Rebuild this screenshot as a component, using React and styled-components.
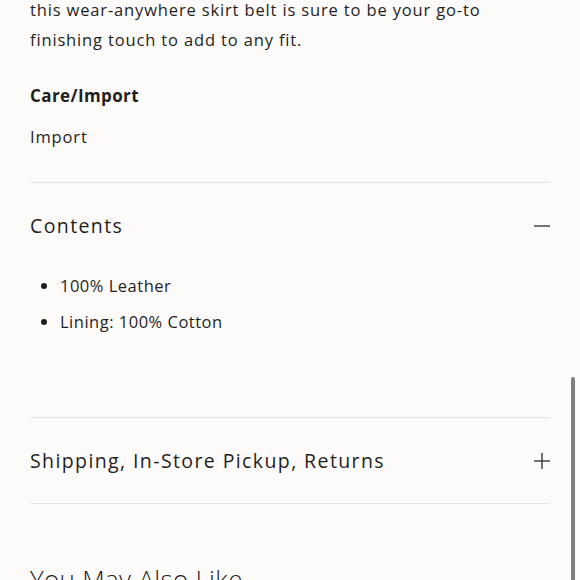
import styled, { createGlobalStyle } from "styled-components";

const GlobalStyle = createGlobalStyle`
  body {
    margin: 0;
    background: #fdfbf9;
    color: #1f1f1f;
    font-family: "Open Sans", "Liberation Sans", sans-serif;
    overflow: hidden;
  }
`;

const Page = styled.div`
  height: 580px;
  overflow: hidden;
  padding: 0 30px;
`;

const Text = styled.p`
  margin: ${(p) => p.$m || "0"};
  font-size: 16.5px;
  line-height: 30px;
  letter-spacing: 0.85px;
`;

const Label = styled.h4`
  margin: 26px 0 0;
  font-size: 17px;
  line-height: 30px;
  font-weight: 700;
  letter-spacing: 0.4px;
`;

const Item = styled.section`
  border-top: 1px solid #e7e3df;
  margin-top: ${(p) => p.$mt || "0"};
`;

const Header = styled.div`
  display: flex;
  align-items: center;
  justify-content: space-between;
  height: 85px;
`;

const Title = styled.h3`
  margin: 0;
  font-size: 19.5px;
  font-weight: 400;
  letter-spacing: 1.4px;
`;

const List = styled.ul`
  margin: -1px 0 0;
  padding: 0 0 78px 30px;
  list-style: disc;
`;

const Li = styled.li`
  font-size: 16.5px;
  line-height: 36px;
  height: 36px;
  letter-spacing: 0.5px;
  &::marker {
    font-size: 18px;
  }
`;

const Heading = styled.h2`
  margin: 58px 0 0;
  font-size: 26px;
  line-height: 34px;
  font-weight: 300;
  letter-spacing: 0.3px;
`;

const Scrollbar = styled.div`
  position: fixed;
  left: 571px;
  top: 377px;
  width: 4px;
  height: 220px;
  background: #7f7f7f;
  border-radius: 2px;
`;

function Toggle({ open }) {
  return (
    <svg width="16" height="16" viewBox="0 0 16 16" fill="none" stroke="#2a2a2a" strokeWidth="1.3">
      <line x1="0" y1="8" x2="16" y2="8" />
      {!open && <line x1="8" y1="0" x2="8" y2="16" />}
    </svg>
  );
}

export default function App() {
  return (
    <>
      <GlobalStyle />
      <Page>
        <Text $m="-5px 0 0">
          this wear-anywhere skirt belt is sure to be your go-to finishing touch to add to any fit.
        </Text>
        <Label>Care/Import</Label>
        <Text $m="11px 0 0">Import</Text>
        <Item $mt="30px">
          <Header>
            <Title>Contents</Title>
            <Toggle open />
          </Header>
          <List>
            <Li>100% Leather</Li>
            <Li>Lining: 100% Cotton</Li>
          </List>
        </Item>
        <Item>
          <Header>
            <Title>Shipping, In-Store Pickup, Returns</Title>
            <Toggle />
          </Header>
        </Item>
        <Item>
          <Heading>You May Also Like</Heading>
        </Item>
      </Page>
      <Scrollbar />
    </>
  );
}
